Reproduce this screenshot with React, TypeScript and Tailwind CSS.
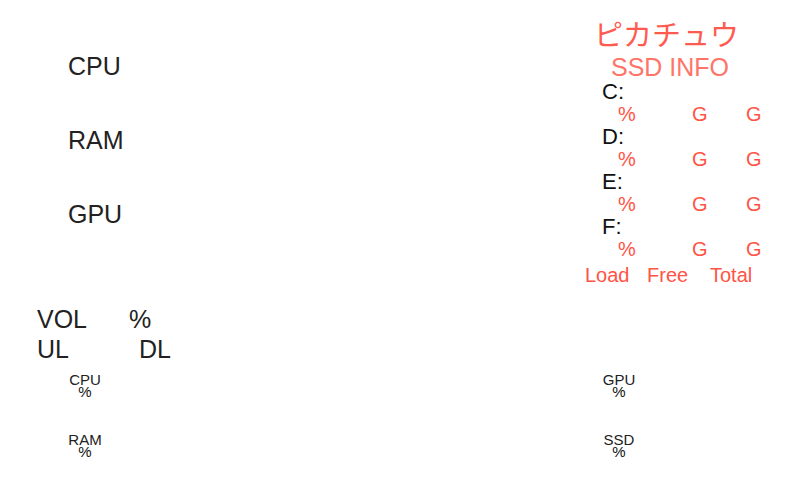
const meters = ["CPU", "RAM", "GPU"];
const drives = ["C:", "D:", "E:", "F:"];

function Gauge({ label }: { label: string }) {
  return (
    <div className="flex w-[34px] flex-col items-center text-[15px] leading-[12px]">
      <span>{label}</span>
      <span className="text-[#111111]">%</span>
    </div>
  );
}

function DriveTable() {
  return (
    <table className="w-full table-fixed border-collapse text-left text-[20px] leading-[22px] text-[#ff5346]">
      <colgroup>
        <col className="w-[62px]" />
        <col className="w-[63px]" />
        <col />
      </colgroup>
      {drives.map((drive) => (
        <tbody key={drive}>
          <tr>
            <th
              colSpan={3}
              scope="rowgroup"
              className="p-0 pl-[17px] text-[22px] leading-[23px] font-normal text-[#111111]"
            >
              {drive}
            </th>
          </tr>
          <tr>
            <td className="p-0 pl-[33px]">%</td>
            <td className="p-0 pl-[45px]">G</td>
            <td className="p-0 pl-[36px]">G</td>
          </tr>
        </tbody>
      ))}
      <tfoot>
        <tr>
          <td className="p-0 pt-1">Load</td>
          <td className="p-0 pt-1">Free</td>
          <td className="p-0 pt-1">Total</td>
        </tr>
      </tfoot>
    </table>
  );
}

export default function App() {
  return (
    <main className="flex min-h-screen justify-between bg-white font-['Liberation_Sans',Arial,'Noto_Sans_CJK_JP',sans-serif] text-[#222222]">
      <section className="pt-[51px] text-[25px] leading-[30px]">
        <ul className="flex flex-col gap-11 pl-[68px]">
          {meters.map((name) => (
            <li key={name}>{name}</li>
          ))}
        </ul>
        <div className="pt-[75px] pl-[37px]">
          <div className="flex">
            <span className="w-[92px]">VOL</span>
            <span>%</span>
          </div>
          <div className="flex">
            <span className="w-[102px]">UL</span>
            <span>DL</span>
          </div>
        </div>
        <div className="flex flex-col gap-9 pt-[10px] pl-[68px]">
          <Gauge label="CPU" />
          <Gauge label="RAM" />
        </div>
      </section>

      <aside className="w-[215px] pt-[17px]">
        <h1 className="pl-[9px] font-['Noto_Sans_CJK_JP',sans-serif] text-[29px] leading-[32px] font-normal text-[#ff5a50]">
          ピカチュウ
        </h1>
        <h2 className="mt-[5px] pl-[26px] text-[25px] leading-[26px] text-[#ff7468]">
          SSD INFO
        </h2>
        <DriveTable />
        <div className="flex flex-col gap-9 pt-[88px] pl-[17px]">
          <Gauge label="GPU" />
          <Gauge label="SSD" />
        </div>
      </aside>
    </main>
  );
}
